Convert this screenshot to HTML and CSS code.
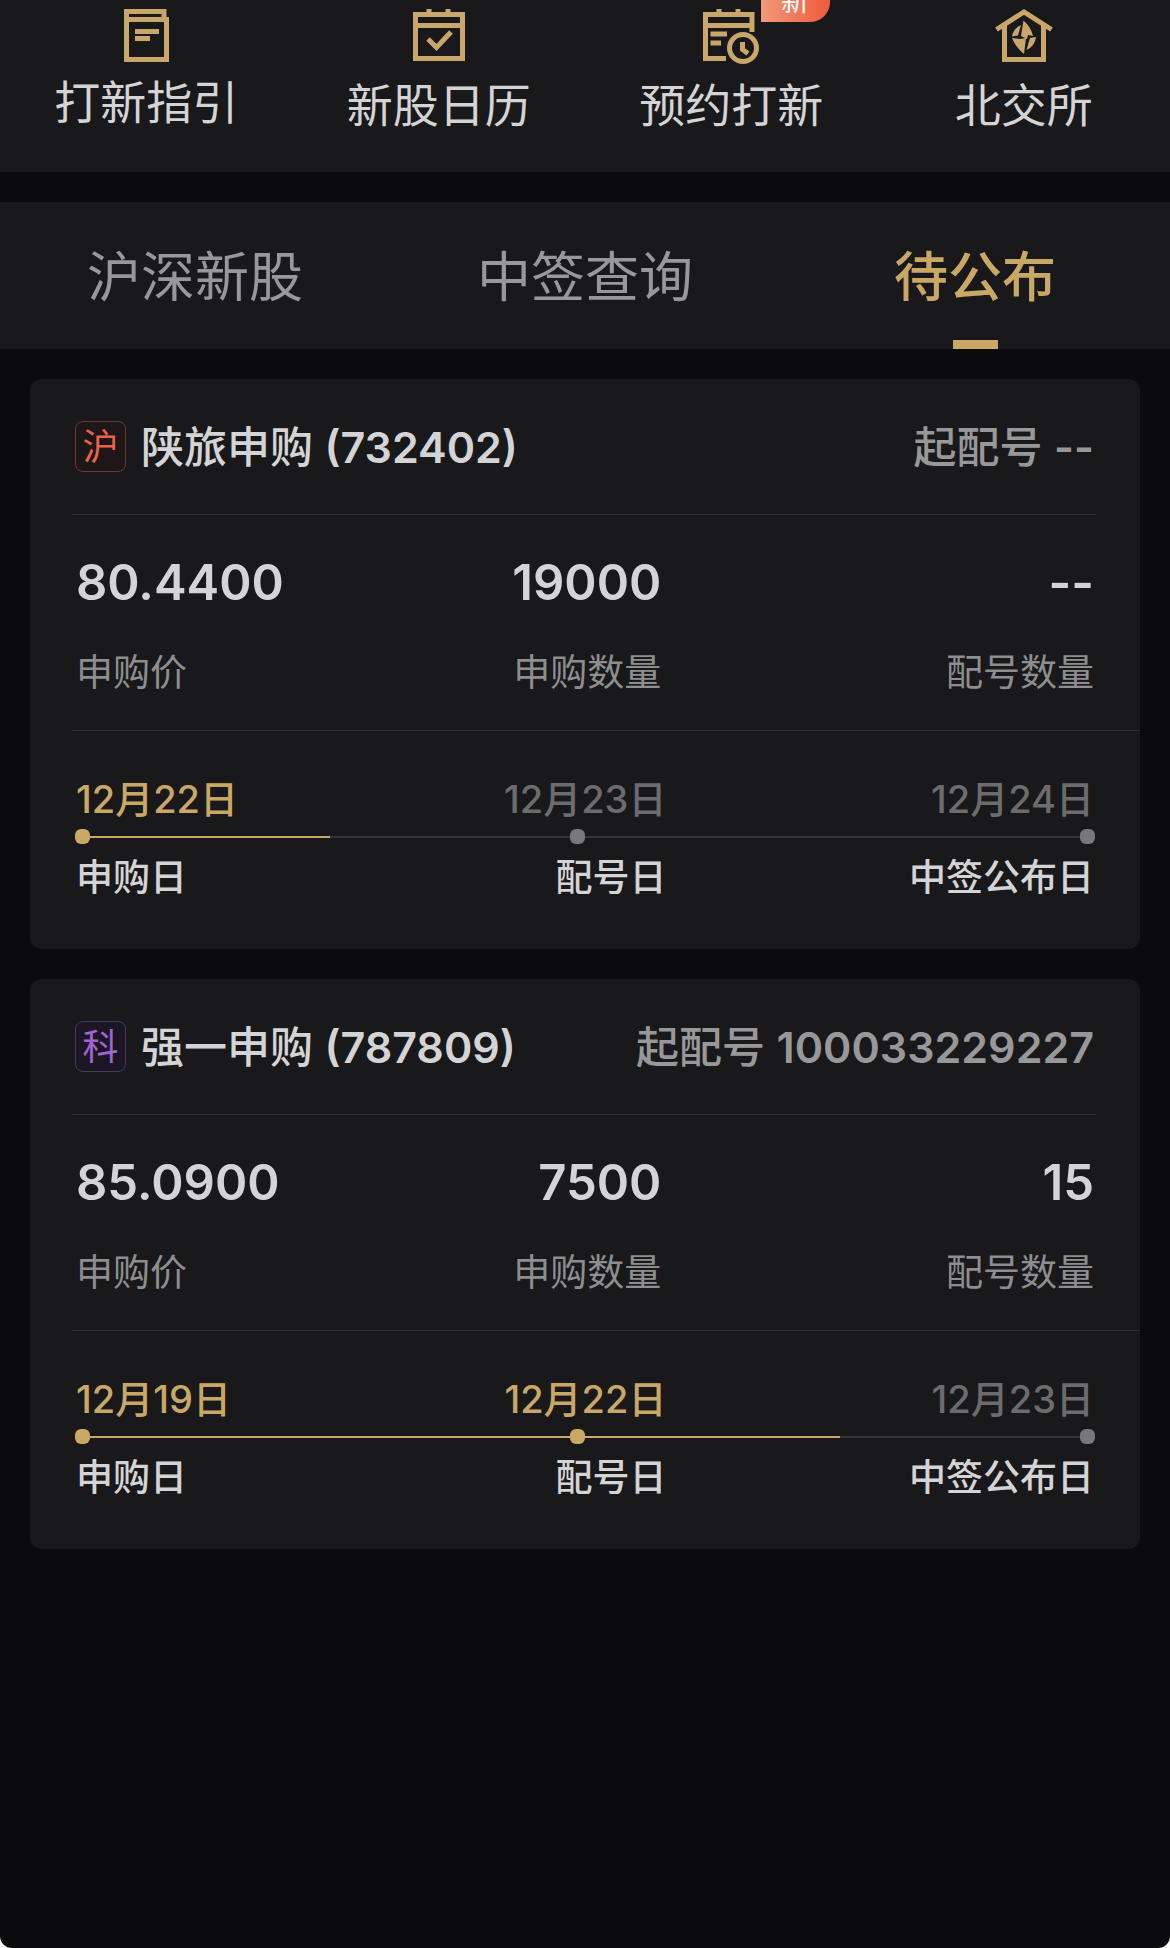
FILE: index.html
```html
<!DOCTYPE html>
<html lang="zh-CN">
<head>
    <meta charset="UTF-8">
    <meta name="viewport" content="width=device-width, initial-scale=1.0">
    <title>新股申购</title>
    <link rel="stylesheet" href="styles.css">
</head>
<body>
    <div class="page">
        <nav class="shortcuts">
            <a href="#" class="shortcut">
                <svg width="45" height="53" viewBox="0 0 45 53">
                    <path d="M2.5 10V2.5H40V10"/>
                    <rect x="2.5" y="10.5" width="40" height="40"/>
                    <path d="M11 22.5H35M11 29.5H26"/>
                </svg>
                <span>打新指引</span>
            </a>
            <a href="#" class="shortcut">
                <svg width="52" height="56" viewBox="0 0 52 56">
                    <rect x="2.5" y="5.5" width="47" height="44"/>
                    <path d="M2.5 16.5H49.5M16 0V5M35 0V5"/>
                    <path d="M15 30L23.5 38.5L38 23"/>
                </svg>
                <span>新股日历</span>
            </a>
            <a href="#" class="shortcut">
                <span class="new-badge">新</span>
                <svg width="56" height="56" viewBox="0 0 56 56">
                    <path d="M23 49.5H2.5V5.5H49V23M2.5 16.5H49M16 0V5M35 0V5"/>
                    <path d="M7.5 25H24M7.5 34H18"/>
                    <circle cx="40" cy="39" r="13.5"/>
                    <path d="M39.5 33V40.5L45 44.5"/>
                </svg>
                <span>预约打新</span>
            </a>
            <a href="#" class="shortcut">
                <svg width="58" height="56" viewBox="0 0 58 56">
                    <path d="M1.5 20.5L29 3L56.5 20.5"/>
                    <path d="M9.5 16V50.5H48.5V16"/>
                    <path class="solid" d="M28.5 11.5Q36 18 38 27L33 26L32 30L26 27Z"/>
                    <path class="solid" d="M17 27.5Q18 20 26 16L23 26.5Z"/>
                    <path class="solid" d="M17 29L25 30L31 29L29 45Q21 39 17 29Z"/>
                    <path class="solid" d="M41 28Q40 37 31.5 41L35 29Z"/>
                </svg>
                <span>北交所</span>
            </a>
        </nav>

        <nav class="tabs">
            <button type="button" class="tab">沪深新股</button>
            <button type="button" class="tab">中签查询</button>
            <button type="button" class="tab active">待公布</button>
        </nav>

        <main class="card-list">
            <section class="card">
                <header class="card-header">
                    <span class="market market-sh">沪</span>
                    <h2>陕旅申购 <span>(732402)</span></h2>
                    <p class="start-no">起配号 <span>--</span></p>
                </header>
                <dl class="stats">
                    <div><dt>申购价</dt><dd>80.4400</dd></div>
                    <div><dt>申购数量</dt><dd>19000</dd></div>
                    <div><dt>配号数量</dt><dd>--</dd></div>
                </dl>
                <div class="timeline">
                    <div class="row dates">
                        <span class="done">12月22日</span>
                        <span>12月23日</span>
                        <span>12月24日</span>
                    </div>
                    <div class="track" style="--progress: 25%">
                        <i class="dot done"></i>
                        <i class="dot"></i>
                        <i class="dot"></i>
                    </div>
                    <div class="row names">
                        <span>申购日</span>
                        <span>配号日</span>
                        <span>中签公布日</span>
                    </div>
                </div>
            </section>

            <section class="card">
                <header class="card-header">
                    <span class="market market-kc">科</span>
                    <h2>强一申购 <span>(787809)</span></h2>
                    <p class="start-no">起配号 <span>100033229227</span></p>
                </header>
                <dl class="stats">
                    <div><dt>申购价</dt><dd>85.0900</dd></div>
                    <div><dt>申购数量</dt><dd>7500</dd></div>
                    <div><dt>配号数量</dt><dd>15</dd></div>
                </dl>
                <div class="timeline">
                    <div class="row dates">
                        <span class="done">12月19日</span>
                        <span class="done">12月22日</span>
                        <span>12月23日</span>
                    </div>
                    <div class="track" style="--progress: 75%">
                        <i class="dot done"></i>
                        <i class="dot done"></i>
                        <i class="dot"></i>
                    </div>
                    <div class="row names">
                        <span>申购日</span>
                        <span>配号日</span>
                        <span>中签公布日</span>
                    </div>
                </div>
            </section>
        </main>
    </div>
</body>
</html>
```
FILE: styles.css
```css
* {
    box-sizing: border-box;
    margin: 0;
    padding: 0;
}
html {
    background: #fff;
}
body {
    font-family: Inter, "Noto Sans CJK SC", sans-serif;
    color: #d4d4d6;
}
.page {
    min-height: 100vh;
    background: #0b0b0d;
    border-radius: 0 0 12px 12px;
}

/* top shortcuts */
.shortcuts {
    display: grid;
    grid-template-columns: repeat(4, 1fr);
    padding: 9px 0 34px;
    background: #19191b;
}
.shortcut {
    position: relative;
    display: flex;
    flex-direction: column;
    align-items: center;
    gap: 8px;
    font-size: 46px;
    line-height: 65px;
    color: #d4d4d6;
    text-decoration: none;
}
.shortcut svg {
    fill: none;
    stroke: #c9a76b;
    stroke-width: 5;
}
.shortcut .solid {
    fill: #c9a76b;
    stroke: none;
}
.new-badge {
    position: absolute;
    left: 60%;
    bottom: 100%;
    margin-bottom: -13px;
    width: 69px;
    height: 42px;
    border-radius: 20px 20px 20px 0;
    background: linear-gradient(90deg, #f09a7c, #f0593c);
    color: #fff;
    font-size: 28px;
    line-height: 42px;
    text-align: center;
}

/* tabs */
.tabs {
    display: grid;
    grid-template-columns: repeat(3, 1fr);
    margin-top: 30px;
    background: #19191b;
}
.tab {
    display: flex;
    flex-direction: column;
    align-items: center;
    padding-top: 36px;
    height: 147px;
    border: none;
    background: none;
    color: #98989a;
    font-family: inherit;
    font-size: 54px;
    line-height: 80px;
    cursor: pointer;
}
.tab.active {
    color: #c9a866;
    font-weight: 500;
}
.tab.active::after {
    content: "";
    width: 45px;
    height: 9px;
    margin-top: auto;
    background: #c9a866;
}

/* cards */
.card-list {
    display: flex;
    flex-direction: column;
    gap: 30px;
    padding: 30px;
}
.card {
    padding-left: 42px;
    border-radius: 12px;
    background: #19191b;
}
.card-header {
    display: flex;
    align-items: center;
    height: 136px;
    margin-right: 44px;
    padding: 0 2px 0 3px;
    border-bottom: 1px solid #303033;
}
.card-header h2,
.card-header p {
    padding-bottom: 6px;
    font-size: 43px;
    font-weight: 500;
}
.card-header h2 span,
.card-header p span {
    font-weight: 600;
}
.card-header h2 {
    margin-left: 15px;
}
.market {
    width: 51px;
    height: 51px;
    border: 1px solid;
    border-radius: 8px;
    font-size: 36px;
    line-height: 50px;
    text-align: center;
}
.market-sh {
    border-color: #6b3a33;
    background: #1f1617;
    color: #e9644b;
}
.market-kc {
    border-color: #44395a;
    background: #1c1523;
    color: #a065d8;
}
.card-header .start-no {
    margin-left: auto;
    color: #98989a;
}
.stats,
.row {
    display: grid;
    grid-template-columns: 29fr 29fr 42fr;
    padding: 0 46px 0 4px;
    text-align: right;
}
.stats {
    grid-template-columns: 23fr 23fr 34fr;
    padding-top: 38px;
    padding-bottom: 31px;
    border-bottom: 1px solid #303033;
}
.stats div {
    display: flex;
    flex-direction: column-reverse;
    gap: 34px;
}
.stats div:first-child,
.row span:first-child {
    text-align: left;
}
.stats dt {
    color: #8e8e90;
    font-size: 37px;
    line-height: 52px;
}
.stats dd {
    font-size: 49px;
    font-weight: 600;
    line-height: 60px;
}

/* timeline */
.timeline {
    padding: 44px 0 47px;
}
.row {
    font-size: 37px;
    font-weight: 500;
    line-height: 48px;
}
.dates {
    color: #6c6c6f;
    font-size: 38px;
}
.dates .done {
    color: #c9a866;
}
.track {
    display: grid;
    grid-template-columns: 15px 1fr 50%;
    justify-items: end;
    margin: 6px 45px 10px 3px;
    background: linear-gradient(90deg, #c9a866 var(--progress), #343437 0) center / 100% 2px no-repeat;
}
.dot {
    width: 15px;
    height: 15px;
    border-radius: 6px;
    background: #78787b;
}
.dot.done {
    background: #c9a866;
}
```
